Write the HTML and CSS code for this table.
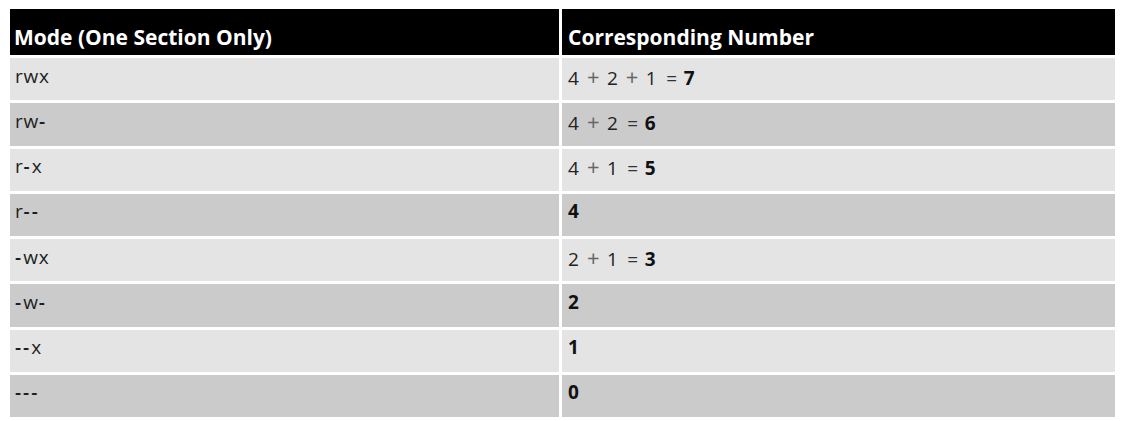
FILE: index.html
```html
<!DOCTYPE html>
<html>
<head>
<meta charset="utf-8">
<link rel="stylesheet" href="styles.css">
</head>
<body>
<table class="perm">
  <thead>
    <tr><th class="c1">Mode (One Section Only)</th><th class="c2">Corresponding Number</th></tr>
  </thead>
  <tbody>
    <tr class="lt"><td class="c1">rwx</td><td class="c2">4<span class="op">+</span>2<span class="op">+</span>1<span class="eq">=</span><b>7</b></td></tr>
    <tr class="dk"><td class="c1">rw<span class="d">-</span></td><td class="c2">4<span class="op">+</span>2<span class="eq">=</span><b>6</b></td></tr>
    <tr class="lt"><td class="c1">r<span class="d">-</span>x</td><td class="c2">4<span class="op">+</span>1<span class="eq">=</span><b>5</b></td></tr>
    <tr class="dk"><td class="c1">r<span class="d">--</span></td><td class="c2"><b>4</b></td></tr>
    <tr class="lt"><td class="c1"><span class="d">-</span>wx</td><td class="c2">2<span class="op">+</span>1<span class="eq">=</span><b>3</b></td></tr>
    <tr class="dk"><td class="c1"><span class="d">-</span>w<span class="d">-</span></td><td class="c2"><b>2</b></td></tr>
    <tr class="lt"><td class="c1"><span class="d">--</span>x</td><td class="c2"><b>1</b></td></tr>
    <tr class="dk"><td class="c1"><span class="d">---</span></td><td class="c2"><b>0</b></td></tr>
  </tbody>
</table>
</body>
</html>
```

FILE: styles.css
```css
html, body {
  margin: 0;
  padding: 0;
  background: #ffffff;
}
body {
  font-family: "Open Sans", "Noto Sans", sans-serif;
  color: #222222;
}
.perm {
  border-collapse: separate;
  border-spacing: 3px;
  margin: 6px 0 0 7px;
  table-layout: fixed;
}
.perm th, .perm td {
  text-align: left;
  vertical-align: middle;
  padding: 0 0 0 6px;
  box-sizing: border-box;
  white-space: nowrap;
}
.perm th {
  background: #000000;
  color: #ffffff;
  font-weight: 700;
  font-size: 21px;
  height: 46px;
  padding-top: 9px;
}
.perm th.c1 { padding-left: 4px; }
.perm td {
  height: 42.25px;
  font-size: 19px;
  padding-bottom: 7px;
}
.perm td.c1 {
  padding-left: 5px;
  letter-spacing: 0.8px;
  color: #1e1e1e;
}
.d {
  letter-spacing: 2px;
  font-weight: 600;
}
.c1 { width: 549px; }
.c2 { width: 553px; }
.lt td { background: #e4e4e4; }
.dk td { background: #cbcbcb; }
.perm td b { font-weight: 700; color: #111111; }
.op {
  display: inline-block;
  width: 12px;
  margin: 0 8px;
  text-align: center;
  color: #666666;
  font-weight: 400;
  font-size: 22px;
}
.eq {
  display: inline-block;
  width: 12px;
  margin: 0 6px 0 9px;
  text-align: center;
  color: #333333;
}
```
